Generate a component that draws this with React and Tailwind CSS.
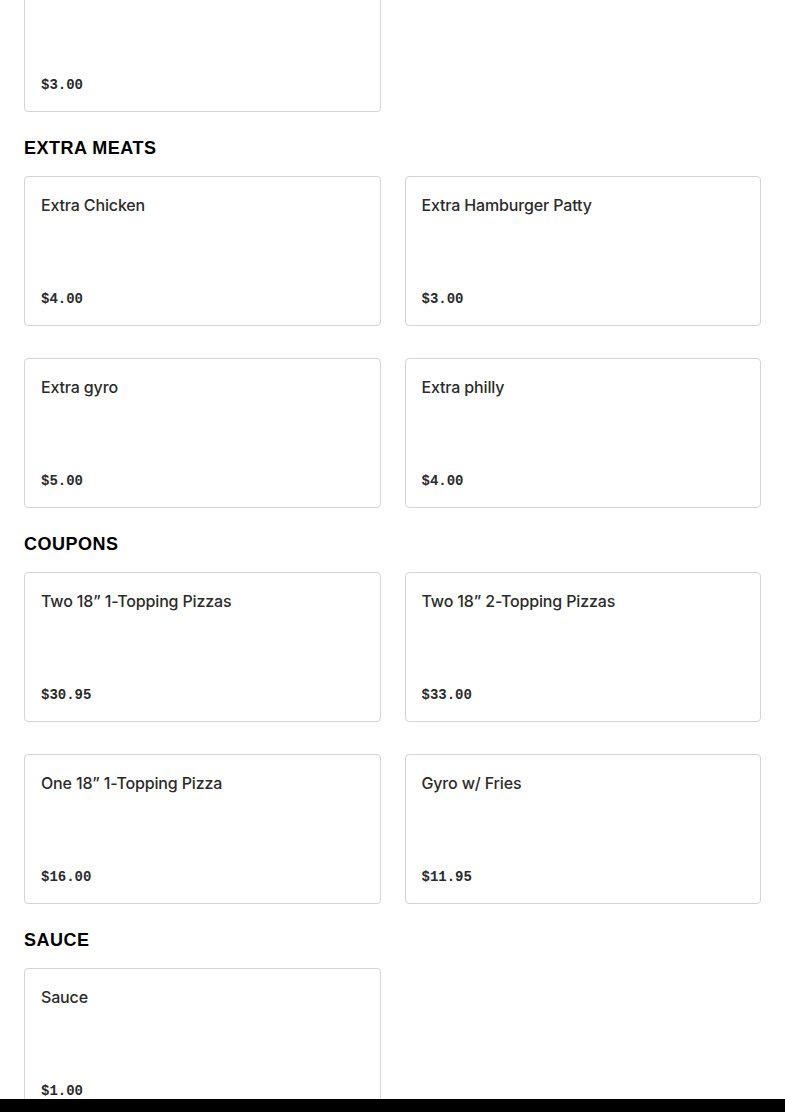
import React from 'react'

const sections = [
  { title: null, items: [{ name: '', price: '$3.00' }] },
  {
    title: 'EXTRA MEATS',
    items: [
      { name: 'Extra Chicken', price: '$4.00' },
      { name: 'Extra Hamburger Patty', price: '$3.00' },
      { name: 'Extra gyro', price: '$5.00' },
      { name: 'Extra philly', price: '$4.00' },
    ],
  },
  {
    title: 'COUPONS',
    items: [
      { name: 'Two 18\u201D 1-Topping Pizzas', price: '$30.95' },
      { name: 'Two 18\u201D 2-Topping Pizzas', price: '$33.00' },
      { name: 'One 18\u201D 1-Topping Pizza', price: '$16.00' },
      { name: 'Gyro w/ Fries', price: '$11.95' },
    ],
  },
  { title: 'SAUCE', items: [{ name: 'Sauce', price: '$1.00' }] },
]

function ItemCard({ item }) {
  return (
    <div className="h-[150px] flex flex-col justify-between rounded border border-[#d4d4d4] bg-white px-4 pt-4 pb-4">
      <h3 className="text-[16px] leading-6 font-medium tracking-[-0.15px] text-[#2b2b2b]" style={{ fontFamily: 'Inter, "Noto Sans", sans-serif' }}>
        {item.name}
      </h3>
      <span className="text-[14px] leading-5 font-bold text-[#2b2b2b]" style={{ fontFamily: '"Liberation Mono", monospace' }}>
        {item.price}
      </span>
    </div>
  )
}

export default function App() {
  return (
    <div className="min-h-screen bg-white px-6 overflow-hidden">
      <div className="-mt-[38px]">
        {sections.map((s, i) => (
          <section key={i} className={i > 0 ? 'mt-6' : ''}>
            {s.title && (
              <h2
                className="text-[18px] leading-6 font-black text-black mb-4 tracking-[0.5px]"
                style={{ fontFamily: '"Liberation Sans", Arial, sans-serif' }}
              >
                {s.title}
              </h2>
            )}
            <div className="grid grid-cols-2 gap-x-6 gap-y-8">
              {s.items.map((item, j) => (
                <ItemCard key={j} item={item} />
              ))}
            </div>
          </section>
        ))}
      </div>
      <div className="fixed bottom-0 left-0 right-0 h-[13px] bg-black" />
    </div>
  )
}
